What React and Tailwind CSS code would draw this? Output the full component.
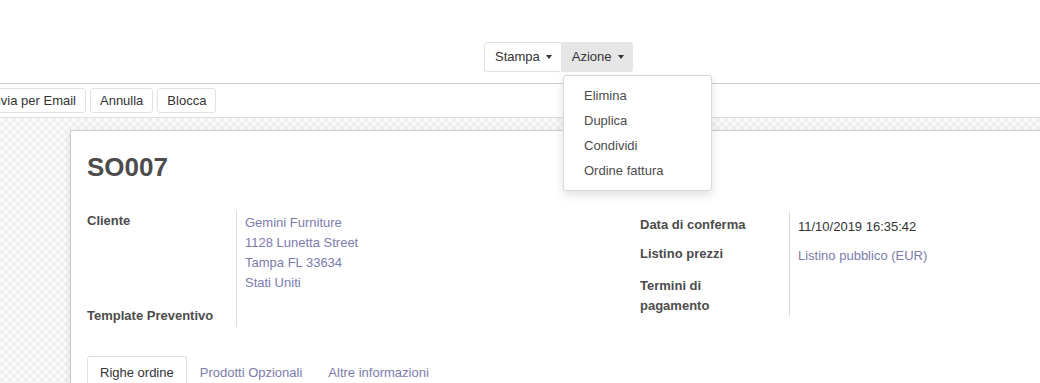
import React from "react";

const Caret = () => (
  <span className="inline-block w-0 h-0 ml-[6px] align-middle border-x-[3.5px] border-x-transparent border-t-[4px] border-t-[#333]" />
);

const Label = ({ children, className = "" }) => (
  <div className={`w-[149px] shrink-0 font-bold text-[#4c4c4c] leading-[20px] ${className}`}>{children}</div>
);

const App = () => {
  const menuItems = ["Elimina", "Duplica", "Condividi", "Ordine fattura"];

  return (
    <div className="relative w-[1040px] h-[383px] overflow-hidden bg-white text-[13px] text-[#4c4c4c] font-['Liberation_Sans',Arial,sans-serif]">
      {/* control panel top */}
      <div className="h-[84px] border-b border-[#cfcfcf] pt-[42px] pl-[484px]">
        <div className="flex h-[30px]">
          <button className="flex items-center h-full pl-[10px] pr-[9px] border border-[#e2e2e2] rounded-l-[3px] bg-white text-[#333]">
            Stampa
            <Caret />
          </button>
          <button className="flex items-center h-full pl-[10px] pr-[9px] bg-[#e6e6e6] rounded-r-[3px] text-[#333]">
            Azione
            <Caret />
          </button>
        </div>
      </div>

      {/* status buttons */}
      <div className="h-[34px] border-b border-[#dcdcdc] flex items-center gap-[4px] ml-[-20px]">
        {["Invia per Email", "Annulla", "Blocca"].map((b) => (
          <button
            key={b}
            className="h-[25px] px-[9px] border border-[#dee2e6] rounded-[3px] bg-white text-[#333] leading-[23px]"
          >
            {b}
          </button>
        ))}
      </div>

      {/* sheet background */}
      <div className="h-[300px] pt-[12px] pl-[70px] bg-[repeating-conic-gradient(#efefef_0%_25%,#fafafa_0%_50%)] bg-[length:8px_8px]">
        <div className="h-full bg-white border-l border-t border-[#c9c9d4] shadow-[-2px_0_6px_rgba(0,0,0,0.06)] pl-[16px]">
          <h1 className="pt-[20px] h-[80px] text-[26px] font-bold text-[#4c4c4c] leading-[32px]">SO007</h1>

          <div className="flex">
            {/* left group */}
            <div className="w-[553px] shrink-0">
              <div className="flex h-[95px]">
                <Label>Cliente</Label>
                <div className="border-l border-[#dadada] pl-[8px] pt-[2px] leading-[20px] text-[#7c7bad]">
                  <div>Gemini Furniture</div>
                  <div>1128 Lunetta Street</div>
                  <div>Tampa FL 33634</div>
                  <div>Stati Uniti</div>
                </div>
              </div>
              <div className="flex h-[21px]">
                <Label>Template Preventivo</Label>
                <div className="border-l border-[#dadada]" />
              </div>
            </div>

            {/* right group */}
            <div className="pt-[1px]">
              <div className="flex h-[29px]">
                <Label className="pt-[3px]">Data di conferma</Label>
                <div className="border-l border-[#dadada] pl-[8px] pt-[5px] leading-[20px] text-[#333]">
                  11/10/2019 16:35:42
                </div>
              </div>
              <div className="flex h-[29px]">
                <Label className="pt-[3px]">Listino prezzi</Label>
                <div className="border-l border-[#dadada] pl-[8px] pt-[5px] leading-[20px] text-[#7c7bad]">
                  Listino pubblico (EUR)
                </div>
              </div>
              <div className="flex h-[46px]">
                <Label className="pt-[6px]">
                  Termini di
                  <br />
                  pagamento
                </Label>
                <div className="border-l border-[#dadada]" />
              </div>
            </div>
          </div>

          {/* tabs */}
          <div className="flex mt-[29px]">
            <div className="h-[34px] px-[12px] pt-[8px] border border-b-0 border-[#dee2e6] rounded-t-[3px] text-[#333] leading-[16px]">
              Righe ordine
            </div>
            <div className="px-[13px] pt-[9px] text-[#7c7bad] leading-[16px]">Prodotti Opzionali</div>
            <div className="px-[13px] pt-[9px] text-[#7c7bad] leading-[16px]">Altre informazioni</div>
          </div>
        </div>
      </div>

      {/* Azione dropdown */}
      <div className="absolute left-[563px] top-[75px] w-[149px] py-[7px] bg-white border border-[#d9d9d9] rounded-[3px] shadow-[0_4px_10px_rgba(0,0,0,0.12)]">
        {menuItems.map((m) => (
          <div key={m} className="h-[25px] leading-[25px] px-[20px] text-[#4c4c4c]">
            {m}
          </div>
        ))}
      </div>
    </div>
  );
};

export default App;
